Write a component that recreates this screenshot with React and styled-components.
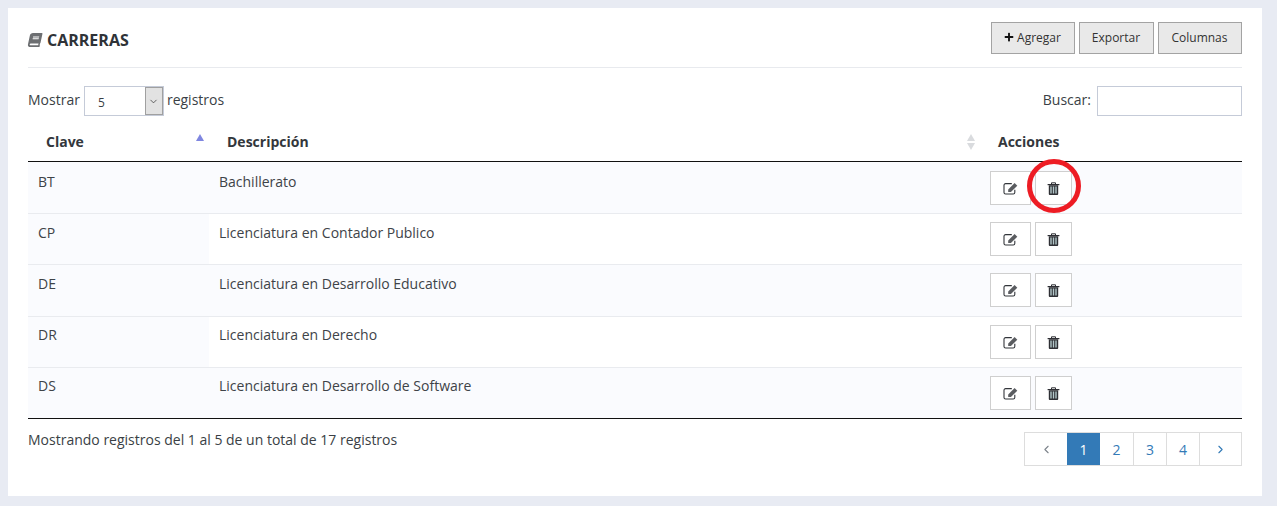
import React from 'react';
import styled, { createGlobalStyle } from 'styled-components';
import { FaBook, FaPlus } from 'react-icons/fa';
import { ChevronDown, ChevronLeft, ChevronRight } from 'lucide-react';

const GlobalStyle = createGlobalStyle`
  html, body {
    margin: 0;
    padding: 0;
    background: #e8ebf3;
  }
  body {
    font-family: "Open Sans", "Noto Sans", sans-serif;
    font-size: 14px;
    color: #3a3f45;
  }
  * { box-sizing: border-box; }
`;

const Page = styled.div`
  height: 506px;
  padding: 8px 15px 10px 8px;
`;

const Panel = styled.div`
  background: #fff;
  height: 488px;
  padding: 14px 20px 0;
`;

const PanelHeader = styled.div`
  display: flex;
  justify-content: space-between;
  align-items: flex-start;
  height: 46px;
  border-bottom: 1px solid #e8eaee;
`;

const Title = styled.h2`
  display: flex;
  align-items: center;
  gap: 5px;
  margin: 8px 0 0;
  font-size: 16px;
  line-height: 20px;
  font-weight: 700;
  color: #2f3338;

  svg {
    font-size: 14px;
    color: #6d6f72;
    transform: skewX(-12deg);
  }
`;

const Toolbar = styled.div`
  display: flex;
  gap: 4px;
`;

const ToolButton = styled.button`
  display: flex;
  align-items: center;
  justify-content: center;
  gap: 3px;
  height: 32px;
  width: ${(p) => p.$width}px;
  padding: 0 1px 2px 0;
  border: 1px solid #a3a3a3;
  background: #e9e9e9;
  color: #333;
  font-family: inherit;
  font-size: 12px;

  svg {
    font-size: 10px;
    color: #111;
  }
`;

const Controls = styled.div`
  display: flex;
  justify-content: space-between;
  align-items: flex-start;
  margin-top: 18px;
  height: 30px;
`;

const LengthLabel = styled.div`
  display: flex;
  align-items: flex-start;
  gap: 4px;
  line-height: 28px;
`;

const FakeSelect = styled.div`
  display: flex;
  width: 80px;
  height: 30px;
  margin-right: -1px;
  border: 1px solid #c5cbd8;
  font-size: 12px;
`;

const SelectValue = styled.span`
  flex: 1;
  padding: 6px 0 0 13px;
  line-height: 20px;
`;

const SelectArrow = styled.span`
  display: flex;
  align-items: center;
  justify-content: center;
  width: 18px;
  background: #e2e2e2;
  border: 1px solid #a0a0a0;
  color: #333;
`;

const SearchLabel = styled.div`
  display: flex;
  align-items: flex-start;
  gap: 6px;
  line-height: 28px;
`;

const SearchInput = styled.input`
  width: 145px;
  height: 30px;
  border: 1px solid #c5cbd8;
  background: #fff;
  outline: none;
`;

const Table = styled.table`
  width: 1214px;
  margin-top: 8px;
  border-collapse: separate;
  border-spacing: 0;
  table-layout: fixed;
  border-bottom: 1px solid #111;
`;

const HeadCell = styled.th`
  position: relative;
  height: 38px;
  padding: 0 18px 2px;
  text-align: left;
  font-weight: 700;
  font-size: 14px;
  color: #33373c;
  border-bottom: 1.5px solid #111;
`;

const SortArrows = styled.span`
  position: absolute;
  right: 5px;
  top: 10px;
  display: flex;
  flex-direction: column;
  gap: 2px;
`;

const Arrow = styled.i`
  display: block;
  width: 0;
  height: 0;
  border-left: 4.5px solid transparent;
  border-right: 4.5px solid transparent;
  ${(p) => (p.$down ? 'border-top' : 'border-bottom')}: 7px solid ${(p) => p.$color};
`;

const Row = styled.tr`
  background: ${(p) => (p.$odd ? '#fafbfe' : '#fff')};
`;

const Cell = styled.td`
  height: ${(p) => p.$height}px;
  padding: ${(p) => p.$pad}px 10px 0;
  vertical-align: top;
  line-height: 22px;
  font-size: 14px;
  color: #3e4348;
  border-top: ${(p) => (p.$first ? 'none' : '1px solid #e9ebef')};
  background: ${(p) => (p.$sorted ? '#fafbfe' : 'transparent')};
`;

const ActionCell = styled(Cell)`
  padding-left: 0;
`;

const Actions = styled.div`
  position: relative;
  display: flex;
  gap: 4px;
  margin-left: 10px;
`;

const IconButton = styled.button`
  display: flex;
  align-items: center;
  justify-content: center;
  height: 34px;
  width: ${(p) => p.$width}px;
  padding: 0;
  border: 1px solid #cfcfcf;
  background: #fff;
  color: #333;
`;

const Annotation = styled.svg`
  position: absolute;
  left: 36px;
  top: -13px;
  width: 56px;
  height: 56px;
  pointer-events: none;
`;

const Footer = styled.div`
  display: flex;
  justify-content: space-between;
  align-items: flex-start;
  margin-top: 13px;
`;

const Info = styled.div`
  line-height: 16px;
`;

const Pager = styled.div`
  display: flex;
  height: 34px;
  border: 1px solid #ddd;
`;

const PageItem = styled.a`
  display: flex;
  align-items: center;
  justify-content: center;
  width: ${(p) => p.$width}px;
  font-size: 14px;
  color: ${(p) => (p.$active ? '#fff' : '#337ab7')};
  background: ${(p) => (p.$active ? '#337ab7' : '#fff')};
  border-left: ${(p) => (p.$divider ? '1px solid #ddd' : 'none')};
`;

const MutedIcon = styled.span`
  display: flex;
  color: #7d838b;
`;

// pencil-in-a-square, closer to the old FontAwesome outline than the package one
const EditIcon = () => (
  <svg width="15" height="13" viewBox="0 0 15 13">
    <path
      d="M8.8 1.6H2.6A1.6 1.6 0 0 0 1 3.2v7.2A1.6 1.6 0 0 0 2.6 12h7.6a1.6 1.6 0 0 0 1.6-1.6V7.8"
      fill="none"
      stroke="#33363b"
      strokeWidth="1.1"
    />
    <path d="M5.2 7.4 11.6 1 14.3 3.7 7.9 10.1H5.2z" fill="#5a5c60" />
  </svg>
);

const TrashIcon = () => (
  <svg width="13" height="13" viewBox="0 0 13 13">
    <path d="M4.5 2V.8h4V2" fill="none" stroke="#2e2f34" strokeWidth="1" />
    <path d="M.6 2h11.8v1.2H.6z" fill="#2e2f34" />
    <path d="M1.8 3.2h9.4V12a.9.9 0 0 1-.9.9H2.7a.9.9 0 0 1-.9-.9z" fill="#2e2f34" />
    <path d="M3.3 4.4h1.4v7H3.3zM5.8 4.4h1.4v7H5.8zM8.3 4.4h1.4v7H8.3z" fill="#b3c8ca" />
  </svg>
);

const rows = [
  { clave: 'BT', descripcion: 'Bachillerato', height: 51, pad: 9, textPad: 9 },
  { clave: 'CP', descripcion: 'Licenciatura en Contador Publico', height: 51, pad: 8, textPad: 8 },
  { clave: 'DE', descripcion: 'Licenciatura en Desarrollo Educativo', height: 52, pad: 8, textPad: 8 },
  { clave: 'DR', descripcion: 'Licenciatura en Derecho', height: 51, pad: 8, textPad: 7 },
  { clave: 'DS', descripcion: 'Licenciatura en Desarrollo de Software', height: 51, pad: 8, textPad: 7 },
];

const App = () => (
  <Page>
    <GlobalStyle />
    <Panel>
      <PanelHeader>
        <Title>
          <FaBook />
          CARRERAS
        </Title>
        <Toolbar>
          <ToolButton $width={84}>
            <FaPlus />
            Agregar
          </ToolButton>
          <ToolButton $width={75}>Exportar</ToolButton>
          <ToolButton $width={84}>Columnas</ToolButton>
        </Toolbar>
      </PanelHeader>

      <Controls>
        <LengthLabel>
          Mostrar
          <FakeSelect>
            <SelectValue>5</SelectValue>
            <SelectArrow>
              <ChevronDown size={11} strokeWidth={1.6} />
            </SelectArrow>
          </FakeSelect>
          registros
        </LengthLabel>
        <SearchLabel>
          Buscar:
          <SearchInput />
        </SearchLabel>
      </Controls>

      <Table>
        <colgroup>
          <col style={{ width: 181 }} />
          <col style={{ width: 771 }} />
          <col />
        </colgroup>
        <thead>
          <tr>
            <HeadCell>
              Clave
              <SortArrows>
                <Arrow $color="#7f86e0" />
              </SortArrows>
            </HeadCell>
            <HeadCell>
              Descripción
              <SortArrows>
                <Arrow $color="#d9dbde" />
                <Arrow $down $color="#d9dbde" />
              </SortArrows>
            </HeadCell>
            <HeadCell>Acciones</HeadCell>
          </tr>
        </thead>
        <tbody>
          {rows.map((row, i) => (
            <Row key={row.clave} $odd={i % 2 === 0}>
              <Cell $first={i === 0} $sorted $height={row.height} $pad={row.textPad}>{row.clave}</Cell>
              <Cell $first={i === 0} $height={row.height} $pad={row.textPad}>{row.descripcion}</Cell>
              <ActionCell $first={i === 0} $height={row.height} $pad={row.pad}>
                <Actions>
                  <IconButton $width={41}>
                    <EditIcon />
                  </IconButton>
                  <IconButton $width={37}>
                    <TrashIcon />
                  </IconButton>
                  {i === 0 && (
                    <Annotation viewBox="0 0 56 56">
                      <circle cx="28" cy="28" r="24.5" fill="none" stroke="#ed1c24" strokeWidth="5" />
                    </Annotation>
                  )}
                </Actions>
              </ActionCell>
            </Row>
          ))}
        </tbody>
      </Table>

      <Footer>
        <Info>Mostrando registros del 1 al 5 de un total de 17 registros</Info>
        <Pager>
          <PageItem $width={42}>
            <MutedIcon>
              <ChevronLeft size={13} strokeWidth={2} />
            </MutedIcon>
          </PageItem>
          <PageItem $width={33} $active>1</PageItem>
          <PageItem $width={33}>2</PageItem>
          <PageItem $width={33} $divider>3</PageItem>
          <PageItem $width={33} $divider>4</PageItem>
          <PageItem $width={42} $divider>
            <ChevronRight size={13} strokeWidth={2} />
          </PageItem>
        </Pager>
      </Footer>
    </Panel>
  </Page>
);

export default App;
